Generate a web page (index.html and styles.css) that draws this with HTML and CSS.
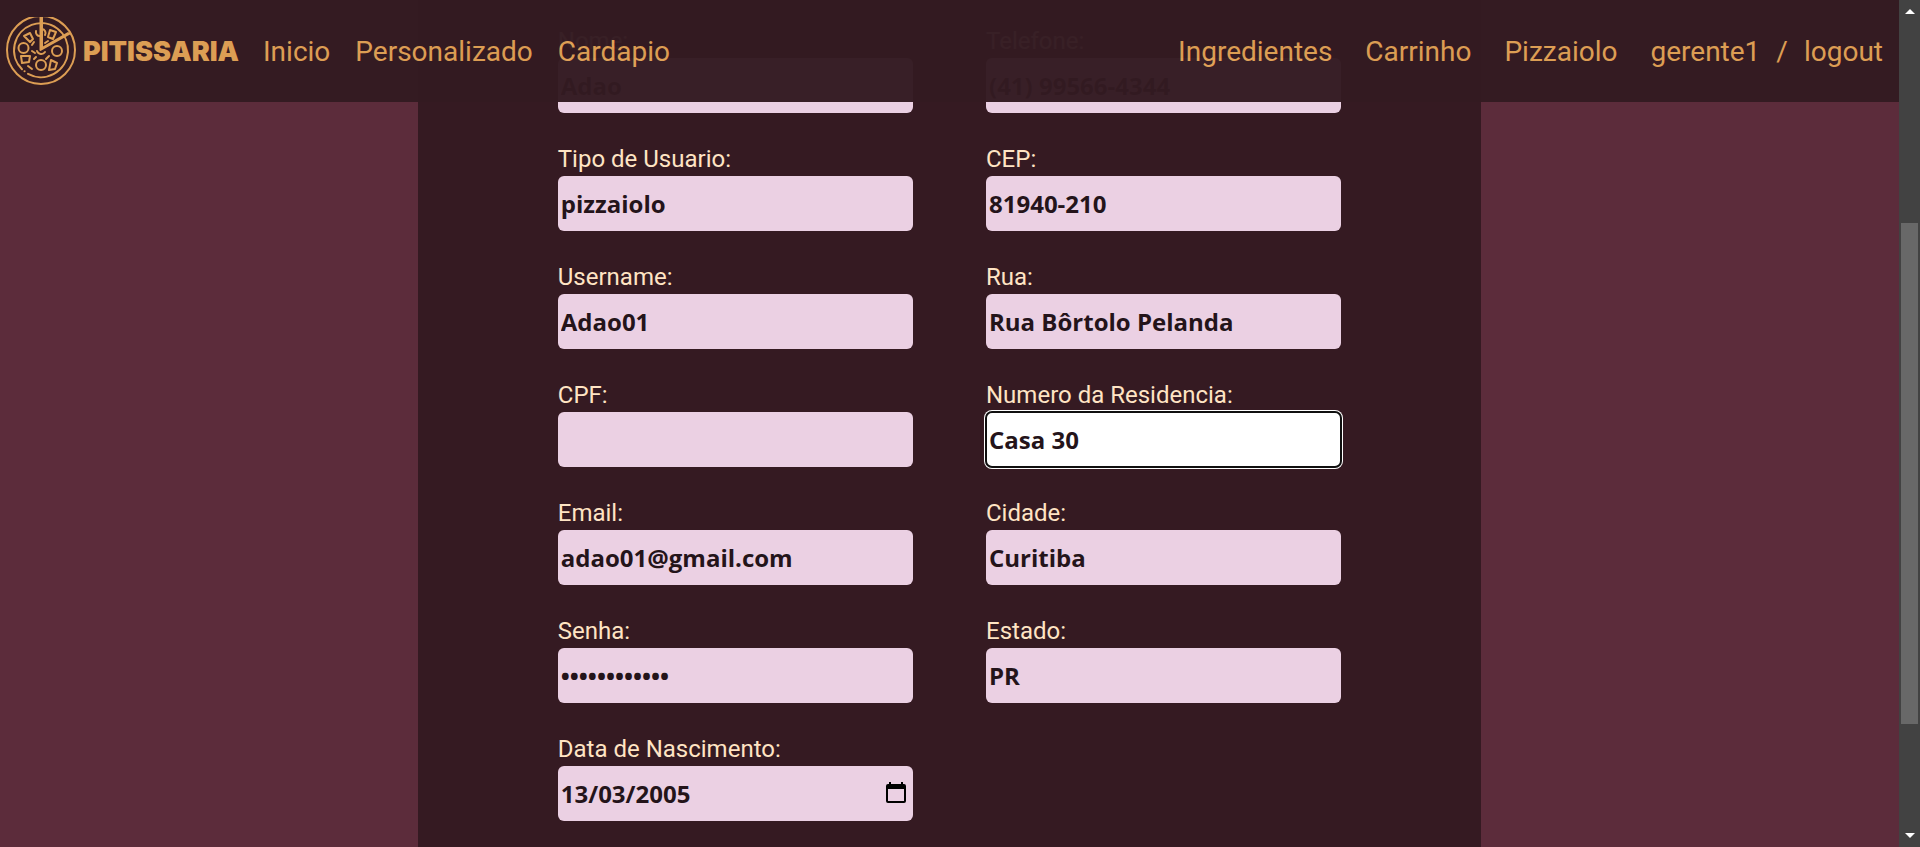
FILE: index.html
```html
<!DOCTYPE html>
<html lang="pt-BR">
<head>
<meta charset="utf-8">
<title>Pitissaria</title>
<link rel="stylesheet" href="styles.css">
</head>
<body>
<header class="navbar">
  <a class="brand" href="#">
    <svg class="brand-icon" viewBox="0 0 70 68" aria-hidden="true">
      <g fill="none" stroke="currentColor" stroke-width="2" stroke-linecap="round">
        <circle cx="35" cy="33" r="34"/>
        <path d="M16 52.300A27 27 0 1 1 22 56.800"/>
        <path d="M18.500 54.300h.1"/>
        <path d="M34.500 0V33L64 16.500M36 0V31L62 16" stroke-linejoin="round"/>
        <circle cx="17.500" cy="31" r="5"/><circle cx="51" cy="34" r="5"/><circle cx="35" cy="48" r="5"/>
        <path d="M31 34a4.500 4.500 0 0 0 8 1M30 14a4 4 0 0 0 4 5M36 12a4 4 0 0 1 3 6"/>
        <path d="M18 19l6-3 3 6-3 3zM44 13l6 2-3 7-5-2zM15 39h9l-1 6-7 1zM45 43l6 3-2 6-6 1z" stroke-linejoin="round"/>
        <path d="M26 28l2-3M26 34l3 2M28 42l2-2M40 42l3-3M39 26l3-2M22 49l4 3"/>
      </g>
    </svg>
    <span class="brand-name">PITISSARIA</span>
  </a>
  <nav class="menu">
    <a href="#">Inicio</a>
    <a href="#">Personalizado</a>
    <a href="#">Cardapio</a>
  </nav>
  <nav class="menu menu-user">
    <a href="#">Ingredientes</a>
    <a href="#">Carrinho</a>
    <a href="#">Pizzaiolo</a>
    <span class="session"><a href="#">gerente1</a><span>/</span><a href="#">logout</a></span>
  </nav>
</header>
<main class="page">
  <form class="panel">
    <div class="column">
      <div class="field"><label for="nome">Nome:</label><input id="nome" type="text" value="Adao"></div>
      <div class="field"><label for="tipo">Tipo de Usuario:</label><input id="tipo" type="text" value="pizzaiolo"></div>
      <div class="field"><label for="username">Username:</label><input id="username" type="text" value="Adao01"></div>
      <div class="field"><label for="cpf">CPF:</label><input id="cpf" type="text"></div>
      <div class="field"><label for="email">Email:</label><input id="email" type="email" value="adao01@gmail.com"></div>
      <div class="field"><label for="senha">Senha:</label><input id="senha" type="password" value="pizzaiolo123"></div>
      <div class="field">
        <label for="nascimento">Data de Nascimento:</label>
        <div class="date">
          <input id="nascimento" type="text" value="13/03/2005">
          <button class="date-button" type="button" aria-label="Abrir calendario">
            <svg viewBox="0 0 20 22" aria-hidden="true"><path fill="currentColor" fill-rule="evenodd" d="M3 0h2v2h10V0h2v2h1a2 2 0 0 1 2 2v15a2 2 0 0 1-2 2H2a2 2 0 0 1-2-2V4a2 2 0 0 1 2-2h1zM2 7v12h16V7z"/></svg>
          </button>
        </div>
      </div>
    </div>
    <div class="column">
      <div class="field"><label for="telefone">Telefone:</label><input id="telefone" type="tel" value="(41) 99566-4344"></div>
      <div class="field"><label for="cep">CEP:</label><input id="cep" type="text" value="81940-210"></div>
      <div class="field"><label for="rua">Rua:</label><input id="rua" type="text" value="Rua Bôrtolo Pelanda"></div>
      <div class="field"><label for="numero">Numero da Residencia:</label><input id="numero" class="active" type="text" value="Casa 30"></div>
      <div class="field"><label for="cidade">Cidade:</label><input id="cidade" type="text" value="Curitiba"></div>
      <div class="field"><label for="estado">Estado:</label><input id="estado" type="text" value="PR"></div>
    </div>
  </form>
</main>
<div class="scrollbar" aria-hidden="true">
  <svg class="arrow" viewBox="0 0 10 5"><path fill="currentColor" d="M5 0l5 5H0z"/></svg>
  <div class="track"><div class="thumb"></div></div>
  <svg class="arrow" viewBox="0 0 10 5"><path fill="currentColor" d="M0 0h10L5 5z"/></svg>
</div>
</body>
</html>
```
FILE: styles.css
```css
* {
  box-sizing: border-box;
}

body {
  margin: 0;
  padding-right: 21px;
  background: #5c2c3b;
  font-family: Roboto, sans-serif;
}

.navbar {
  position: fixed;
  top: 0;
  left: 0;
  right: 21px;
  z-index: 2;
  display: flex;
  align-items: center;
  height: 102px;
  padding: 0 16px 0 6px;
  background: #341b22;
  color: #e0a155;
  opacity: 0.975;
  font-size: 28px;
  line-height: 32px;
}

.navbar a {
  color: inherit;
  text-decoration: none;
}

.brand {
  display: flex;
  align-items: center;
  gap: 7px;
}

.brand-icon {
  width: 70px;
  height: 68px;
}

.brand-name {
  padding-top: 2px;
  font-family: Inter, sans-serif;
  font-weight: 900;
  font-size: 27px;
}

.menu {
  display: flex;
  gap: 25px;
  margin-left: 24px;
  padding-top: 1px;
}

.menu-user {
  gap: 33px;
  margin-left: auto;
}

.session {
  display: flex;
  gap: 16px;
}

.page {
  display: flex;
  justify-content: center;
}

.panel {
  display: flex;
  justify-content: center;
  gap: 73px;
  width: 56%;
  min-height: 100vh;
  padding: 27px 140px 24px;
  background: #351a22;
}

.column {
  flex: 1;
  display: flex;
  flex-direction: column;
  gap: 32px;
}

.field {
  display: flex;
  flex-direction: column;
  gap: 3px;
}

.field label {
  color: #ffe4c4;
  font-size: 24px;
  line-height: 28px;
}

.field input {
  width: 100%;
  height: 55px;
  padding: 1px 3px;
  border: 0;
  border-radius: 6px;
  background: #ebd0e3;
  color: #24141a;
  font-family: "Open Sans", sans-serif;
  font-weight: 700;
  font-size: 24px;
}

.field input.active,
.field input:focus {
  background: #fff;
  outline: 2px solid #101010;
  outline-offset: -1px;
  box-shadow: 0 0 0 2px #fff;
}

.date {
  position: relative;
}

.date-button {
  position: absolute;
  top: 16px;
  right: 7px;
  width: 20px;
  height: 22px;
  padding: 0;
  border: 0;
  background: none;
  color: #000;
}

.date-button svg {
  display: block;
}

.scrollbar {
  position: fixed;
  top: 0;
  right: 0;
  bottom: 0;
  display: flex;
  flex-direction: column;
  align-items: center;
  gap: 8px;
  width: 21px;
  padding: 9px 2px;
  background: #424242;
  color: #fff;
}

.arrow {
  width: 10px;
  height: 5px;
}

.track {
  flex: 1;
  width: 100%;
  padding: 201px 0 101px;
}

.thumb {
  height: 100%;
  background: #686868;
}
```
